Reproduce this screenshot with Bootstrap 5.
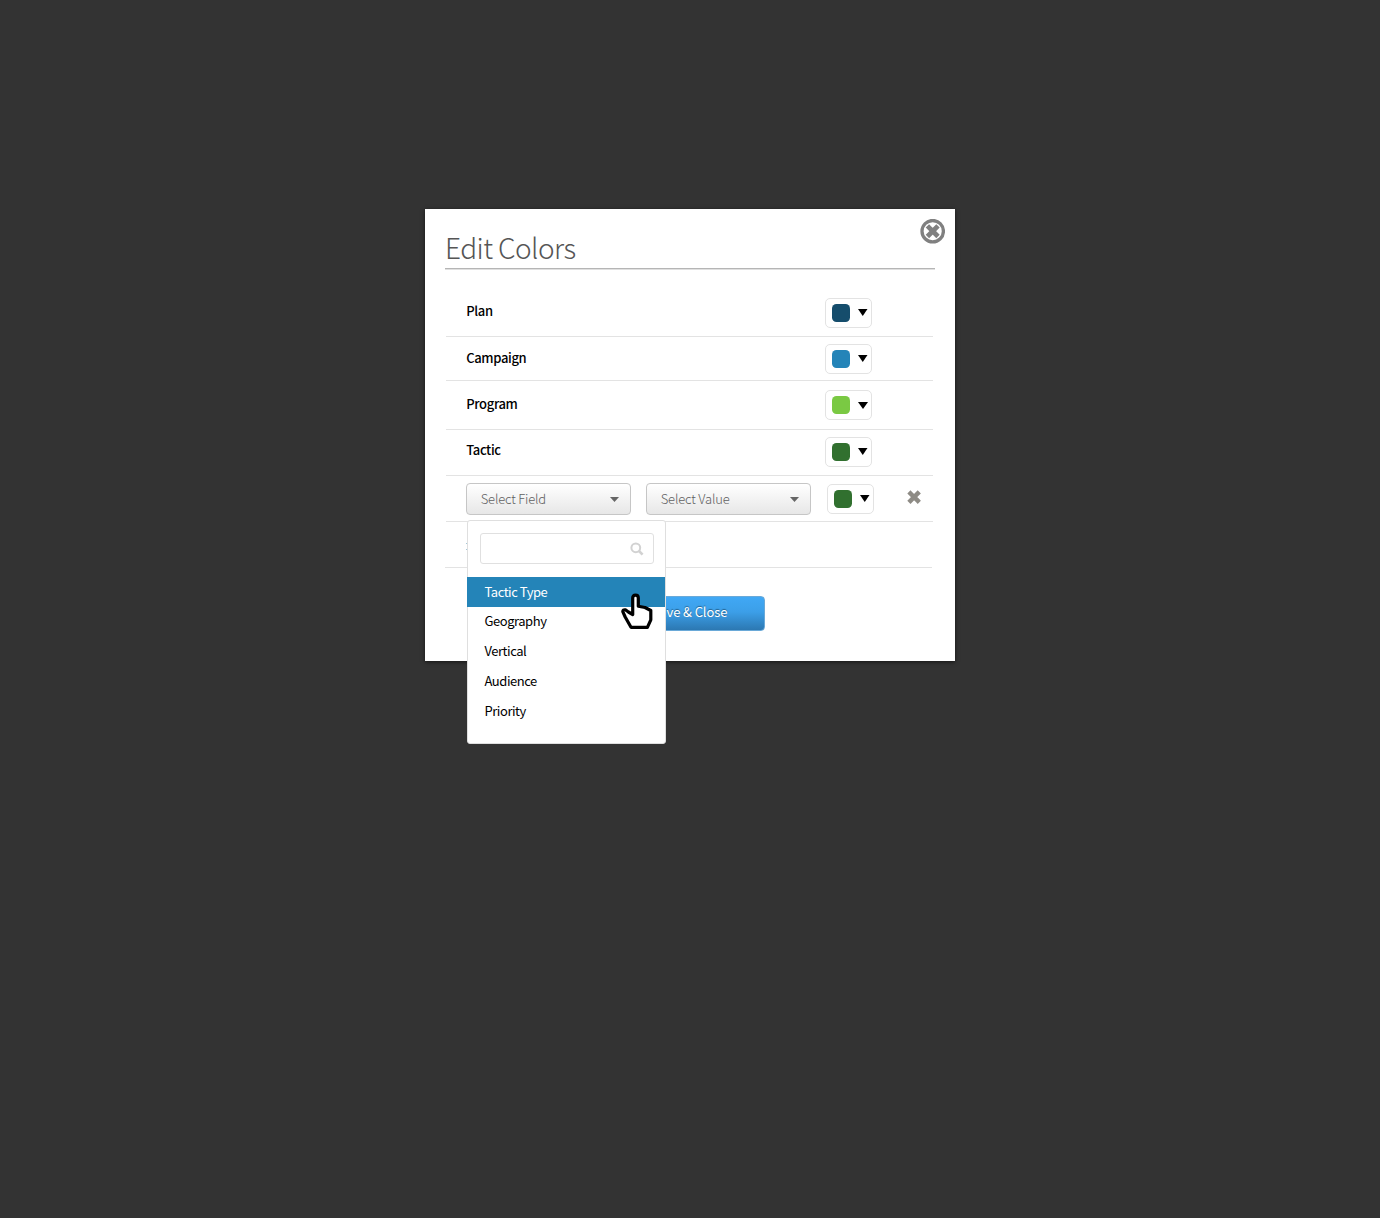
<!DOCTYPE html>
<html lang="en">
<head>
<meta charset="utf-8">
<meta name="viewport" content="width=device-width, initial-scale=1">
<title>Edit Colors</title>
<link href="https://cdn.jsdelivr.net/npm/bootstrap@5.3.0/dist/css/bootstrap.min.css" rel="stylesheet">
<style>
body{background:#333;min-height:1218px;font-family:"Noto Sans CJK SC","Open Sans",sans-serif;font-size:13px;line-height:20px;color:#000}
.dialog-box{width:530px;height:452px;margin-top:209px;background:#fff;box-shadow:0 1px 4px rgba(0,0,0,.6)}
.dialog-head{margin:0 20px;height:61px;border-bottom:1px solid #e0e0e0;box-shadow:inset 0 -1px #b5b5b5;padding-top:18px}
.dialog-title{font-size:28px;font-weight:300;line-height:40px;color:#555;letter-spacing:-.57px}
.close-x{top:10px;right:10px;width:25px;height:25px}
.color-list{padding:0 22px 0 21px}
.color-row{border-bottom:1px solid #e3e3e3;padding:0 61px 0 20px}
.row-name{font-weight:500;line-height:20px;letter-spacing:-.35px;padding-left:.2px}
.r1{height:67px;padding-top:28px}
.r2{height:44px;padding-top:7px}
.r3{height:49px;padding-top:9px}
.r4{height:46px;padding-top:7px}
.r5{height:46px;padding:7px 12px 0 20px}
.r6{height:46px;padding:21px 0 0 21px;margin:0 1px 0 -1px}
.r1 .row-name{padding-top:3px}
.r2 .row-name,.r3 .row-name{padding-top:4px}
.r4 .row-name{padding-top:3px}
.picker{width:47px;height:30px;border:1px solid #e3e3e3;border-radius:5px;background:#fff;padding:5px 0 0 6px}
.r5 .picker{margin:1px 0 0 1px}
.chip{width:18px;height:18px;border-radius:4.5px}
.c-plan{background:#154d6c}.c-camp{background:#2484b8}.c-prog{background:#7ac943}.c-tact{background:#31702f}
.tri{width:10px;height:7px;margin:5px 0 0 8px}
.r3 .tri{margin-top:6px}
.pick-select{width:165px;height:32px;margin-right:15px;border:1px solid #c6c6c6;border-radius:4px;background:linear-gradient(#fff,#e7e7e7);padding:0 11px 0 13.7px;color:#606060;font-weight:300;letter-spacing:-.17px}
.save-btn{width:150px;height:35px;margin-top:28px;border:1px solid #6aa9d8;border-radius:4px;background:linear-gradient(#40a8f5,#3c9fe8 45%,#2c78b2);color:#fff;font-size:13px;line-height:20px;letter-spacing:-.1px;padding:5px 1px 8px 0;text-shadow:0 -1px 1px rgba(0,0,0,.4)}
.field-menu{top:311px;left:42px;width:199px;height:224px;background:#fff;border:1px solid #dfdfdf;border-radius:3px;z-index:5}
.search-box{margin:12px 11px 13px 12px;height:31px;border:1px solid #e0e0e0;border-radius:3px;padding-right:9px}
.menu-item{height:30px;line-height:28px;padding-left:16.5px;font-size:13px;letter-spacing:-.46px}
.menu-item.picked{background:#2484b8;color:#fff;line-height:30px;margin-left:-1px;padding-left:17.5px}
.hand{top:384px;left:195px;z-index:6}
.link-edge{width:1px;height:7px;border-top:1px solid #a5c8d8;border-bottom:1px solid #a5c8d8}
.row-del{margin-top:7px}
</style>
<script src="https://cdn.jsdelivr.net/npm/bootstrap@5.3.0/dist/js/bootstrap.bundle.min.js"></script>
</head>
<body class="d-flex justify-content-center align-items-start">
<main class="dialog-box position-relative">
  <header class="dialog-head"><h1 class="dialog-title m-0">Edit Colors</h1></header>
  <svg class="close-x position-absolute" viewBox="0 0 25 25"><circle cx="12.700" cy="12.200" r="10.700" fill="none" stroke="#808080" stroke-width="3.300"/><path d="M9.100 8.600l7.200 7.200M16.300 8.600l-7.200 7.200" stroke="#808080" stroke-width="4.800" stroke-linecap="square"/></svg>
  <section class="color-list">
    <div class="color-row r1 d-flex justify-content-between align-items-start"><span class="row-name">Plan</span><div class="picker d-flex align-items-start"><span class="chip c-plan"></span><svg class="tri" viewBox="0 0 10 7"><path d="M0 0h9.500L4.750 7z"/></svg></div></div>
    <div class="color-row r2 d-flex justify-content-between align-items-start"><span class="row-name">Campaign</span><div class="picker d-flex align-items-start"><span class="chip c-camp"></span><svg class="tri" viewBox="0 0 10 7"><path d="M0 0h9.500L4.750 7z"/></svg></div></div>
    <div class="color-row r3 d-flex justify-content-between align-items-start"><span class="row-name">Program</span><div class="picker d-flex align-items-start"><span class="chip c-prog"></span><svg class="tri" viewBox="0 0 10 7"><path d="M0 0h10L5 7z"/></svg></div></div>
    <div class="color-row r4 d-flex justify-content-between align-items-start"><span class="row-name">Tactic</span><div class="picker d-flex align-items-start"><span class="chip c-tact"></span><svg class="tri" viewBox="0 0 10 7"><path d="M0 0h9.500L4.750 7z"/></svg></div></div>
    <div class="color-row r5 d-flex align-items-start">
      <div class="pick-select d-flex align-items-center justify-content-between"><span>Select Field</span><svg width="9" height="5" viewBox="0 0 9 5"><path d="M0 0h9L4.500 5z" fill="#666"/></svg></div>
      <div class="pick-select d-flex align-items-center justify-content-between"><span>Select Value</span><svg width="9" height="5" viewBox="0 0 9 5"><path d="M0 0h9L4.500 5z" fill="#666"/></svg></div>
      <div class="picker d-flex align-items-start"><span class="chip c-tact"></span><svg class="tri" viewBox="0 0 10 7"><path d="M0 0h9.500L4.750 7z"/></svg></div>
      <svg class="row-del ms-auto" width="14" height="14" viewBox="0 0 14 14"><path d="M3.500 3.500l7.200 7.200M10.700 3.500l-7.200 7.200" stroke="#8e8b85" stroke-width="4.500" stroke-linecap="square"/></svg>
    </div>
    <div class="color-row r6 d-flex"><span class="link-edge"></span></div>
  </section>
  <div class="d-flex justify-content-center"><button class="btn save-btn" type="button">Save &amp; Close</button></div>
  <div class="field-menu position-absolute">
    <div class="search-box d-flex align-items-center justify-content-end"><svg width="14" height="14" viewBox="0 0 14 14" fill="none" stroke="#d2d2d2"><circle cx="5.800" cy="5.800" r="4.400" stroke-width="2"/><path d="M9 9l3.600 3.600" stroke-width="2.600"/></svg></div>
    <div class="menu-item picked">Tactic Type</div>
    <div class="menu-item">Geography</div>
    <div class="menu-item">Vertical</div>
    <div class="menu-item">Audience</div>
    <div class="menu-item">Priority</div>
  </div>
  <svg class="hand position-absolute" width="34" height="36" viewBox="0 0 34 36"><path d="M12.700 21.500V5q0-2.800 2.800-2.800T18.300 5v8.300l6.700 1.200 5.800 3v9.300l-3.400 7.500H11L5.200 24 2.800 18.600q0-2.200 2.600-1.800l3 2.200z" fill="#fff" stroke="#000" stroke-width="3.200" stroke-linejoin="round"/></svg>
</main>
</body>
</html>
